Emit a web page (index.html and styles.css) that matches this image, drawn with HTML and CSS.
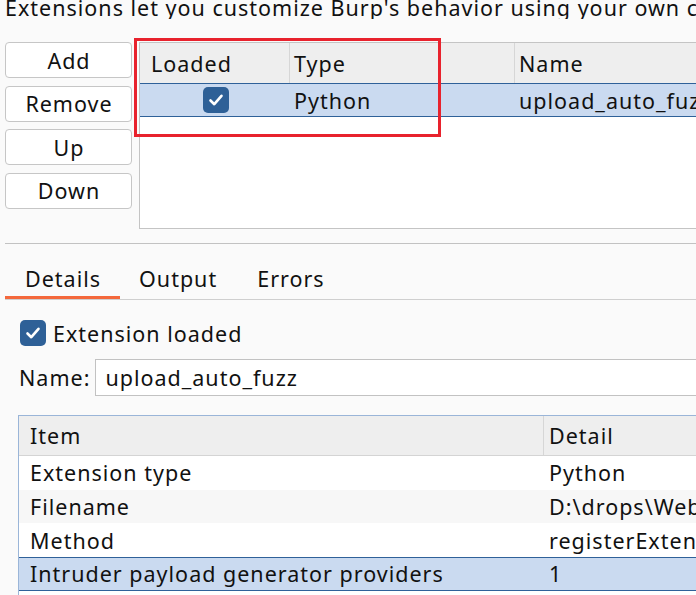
FILE: index.html
```html
<!DOCTYPE html>
<html>
<head>
<meta charset="utf-8">
<link rel="stylesheet" href="styles.css">
</head>
<body>
<div class="intro">Extensions let you customize Burp's behavior using your own code.</div>
<div class="top">
  <div class="btns">
    <div class="btn">Add</div>
    <div class="btn">Remove</div>
    <div class="btn">Up</div>
    <div class="btn">Down</div>
  </div>
  <div class="ext-table">
    <div class="ext-row ext-head">
      <div class="c-loaded hcell hfirst">Loaded</div>
      <div class="c-type hcell">Type</div>
      <div class="c-name hcell">Name</div>
    </div>
    <div class="ext-row ext-sel">
      <div class="c-loaded cell center">
        <span class="chk"><svg viewBox="0 0 26 26" width="26" height="26"><path d="M7.5 13.5 L11.3 17.2 L18.5 8.8" fill="none" stroke="#fff" stroke-width="2.6" stroke-linecap="round" stroke-linejoin="round"/></svg></span>
      </div>
      <div class="c-type cell">Python</div>
      <div class="c-name cell">upload_auto_fuzz</div>
    </div>
  </div>
  <div class="redbox"></div>
</div>
<div class="sep"></div>
<div class="tabs">
  <div class="tab active">Details</div>
  <div class="tab">Output</div>
  <div class="tab">Errors</div>
</div>
<div class="details">
  <div class="loaded-row">
    <span class="chk"><svg viewBox="0 0 26 26" width="26" height="26"><path d="M7.5 13.5 L11.3 17.2 L18.5 8.8" fill="none" stroke="#fff" stroke-width="2.6" stroke-linecap="round" stroke-linejoin="round"/></svg></span>
    <span class="loaded-label">Extension loaded</span>
  </div>
  <div class="name-row">
    <span class="name-label">Name:</span>
    <div class="name-input">upload_auto_fuzz</div>
  </div>
  <div class="dtable">
    <div class="drow dhead">
      <div class="d-item dh dhfirst">Item</div>
      <div class="d-detail dh">Detail</div>
    </div>
    <div class="drow">
      <div class="d-item dc">Extension type</div>
      <div class="d-detail dc">Python</div>
    </div>
    <div class="drow alt">
      <div class="d-item dc">Filename</div>
      <div class="d-detail dc">D:\drops\WebShell\upload_auto_fuzz.py</div>
    </div>
    <div class="drow">
      <div class="d-item dc">Method</div>
      <div class="d-detail dc">registerExtenderCallbacks</div>
    </div>
    <div class="drow dsel">
      <div class="d-item dc">Intruder payload generator providers</div>
      <div class="d-detail dc">1</div>
    </div>
    <div class="drow">
      <div class="d-item dc">&nbsp;</div>
      <div class="d-detail dc">&nbsp;</div>
    </div>
  </div>
</div>
</body>
</html>
```
FILE: styles.css
```css
html, body {
  margin: 0;
  padding: 0;
  overflow: hidden;
}
body {
  width: 696px;
  height: 595px;
  background: #fafafa;
  font-family: "Noto Sans", "Open Sans", sans-serif;
  font-size: 21.5px;
  letter-spacing: 1px;
  color: #111;
  white-space: nowrap;
}
.intro {
  height: 22px;
  line-height: 22px;
  margin-top: -3px;
  padding-left: 5px;
  overflow: hidden;
}
.top {
  position: relative;
  display: flex;
  gap: 7px;
  margin-top: 23px;
  padding-left: 5px;
}
.btns {
  display: flex;
  flex-direction: column;
  gap: 7.5px;
  width: 127px;
  flex-shrink: 0;
}
.btn {
  height: 36px;
  box-sizing: border-box;
  border: 1px solid #c6c6c6;
  border-radius: 4px;
  background: #fff;
  display: flex;
  align-items: center;
  justify-content: center;
  padding-left: 1px;
}
.ext-table {
  flex: 1;
  min-width: 0;
  height: 187px;
  box-sizing: border-box;
  background: #fff;
  border: 1px solid #c4c4c4;
  border-right: none;
  overflow: hidden;
}
.ext-row {
  display: flex;
}
.ext-head {
  height: 40px;
  background: #eeeeee;
}
.ext-sel {
  height: 34px;
  box-sizing: border-box;
  background: #cadaf0;
  border-top: 1px solid #2f6199;
  border-bottom: 1px solid #2f6199;
}
.c-loaded { width: 150px; flex-shrink: 0; }
.c-type { width: 225px; flex-shrink: 0; }
.c-name { flex: 1; min-width: 0; overflow: hidden; }
.hcell {
  box-sizing: border-box;
  display: flex;
  align-items: center;
  padding-left: 4px;
  border-right: 1px solid #d6d6d6;
}
.hfirst { padding-left: 11px; }
.c-name.hcell { border-right: none; }
.cell {
  display: flex;
  align-items: center;
  padding-left: 4px;
  box-sizing: border-box;
}
.cell.center {
  justify-content: center;
  padding-left: 2px;
}
.chk {
  width: 26px;
  height: 26px;
  border-radius: 5px;
  background: #2e6097;
  display: inline-flex;
  align-items: center;
  justify-content: center;
  flex-shrink: 0;
}
.chk svg { display: block; }
.redbox {
  position: absolute;
  left: 134px;
  top: -4px;
  width: 307px;
  height: 99px;
  box-sizing: border-box;
  border: 3px solid #e8222d;
  pointer-events: none;
}
.sep {
  margin-top: 14px;
  margin-left: 5px;
  border-top: 1px solid #c2c2c2;
}
.tabs {
  display: flex;
  margin-left: 5px;
  height: 56px;
  box-sizing: border-box;
  border-bottom: 1px solid #cfcfcf;
  align-items: flex-end;
}
.tab {
  height: 55px;
  box-sizing: border-box;
  padding: 17px 19px 0 20px;
  display: flex;
  align-items: center;
  border-bottom: 3px solid transparent;
}
.tab.active {
  border-bottom-color: #f4683c;
}
.tab:nth-child(2) { padding-left: 19px; }
.tab:nth-child(3) { padding-left: 21px; }
.details {
  padding-top: 20px;
}
.loaded-row {
  display: flex;
  align-items: center;
  gap: 7px;
  padding-left: 20px;
  height: 26px;
}
.name-row {
  display: flex;
  align-items: center;
  margin-top: 13px;
  padding-left: 19px;
  gap: 5px;
}
.name-input {
  flex: 1;
  height: 37px;
  box-sizing: border-box;
  background: #fff;
  border: 1px solid #c2c2c2;
  border-right: none;
  padding-left: 9px;
  display: flex;
  align-items: center;
}
.dtable {
  margin-top: 19px;
  margin-left: 18px;
  background: #fff;
  border: 1px solid #9ab5d8;
  border-right: none;
  border-bottom: none;
}
.drow {
  display: flex;
  height: 33.7px;
  box-sizing: border-box;
}
.drow.alt { background: #f7f7f7; }
.dhead {
  height: 40px;
  background: #eeeeee;
  border-bottom: 1px solid #d4d4d4;
}
.dsel {
  background: #cadaf0;
  border-top: 1px solid #2f6199;
  border-bottom: 1px solid #2f6199;
}
.d-item { width: 525px; flex-shrink: 0; box-sizing: border-box; }
.d-detail { flex: 1; min-width: 0; box-sizing: border-box; }
.dh {
  display: flex;
  align-items: center;
  padding-left: 5px;
  border-right: 1px solid #d6d6d6;
}
.dhfirst { padding-left: 11px; }
.d-detail.dh { border-right: none; }
.dc {
  display: flex;
  align-items: center;
  padding-left: 11px;
  overflow: hidden;
}
.d-detail.dc { padding-left: 5px; }
```
